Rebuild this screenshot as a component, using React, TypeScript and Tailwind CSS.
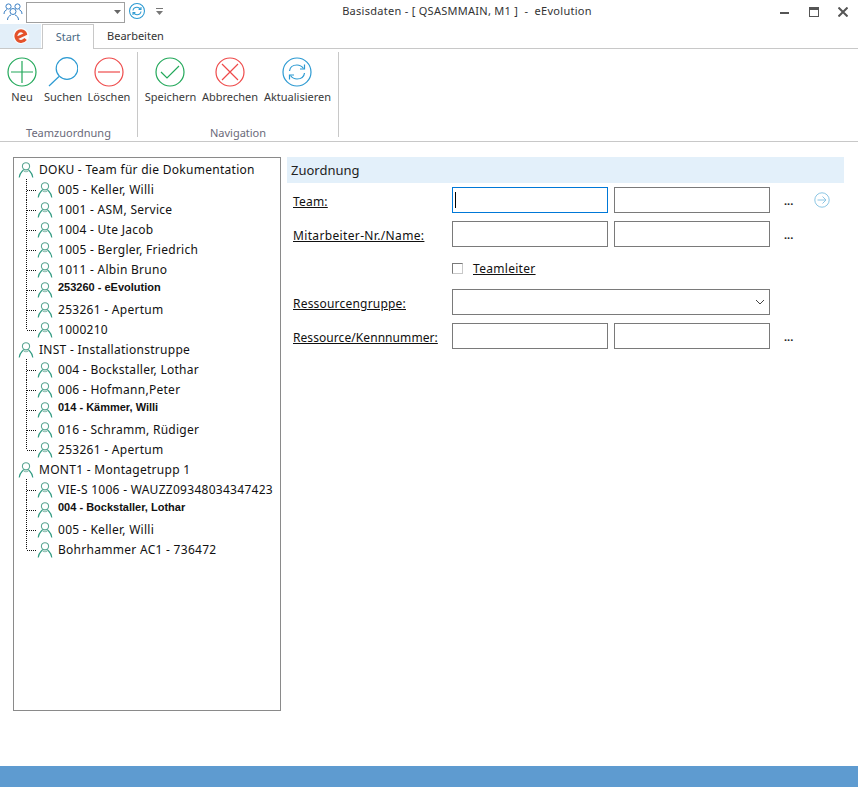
import React from "react";

const font = { fontFamily: '"Noto Sans", "Open Sans", sans-serif' };

function Person() {
  return (
    <svg width="16" height="18" viewBox="0 0 16 18" fill="none" stroke="#2f9a80" strokeWidth="1.1" className="shrink-0">
      <circle cx="8" cy="5.3" r="3.6" stroke="#5aa592" />
      <path d="M5.6 8.4 C 4.6 10.6 1.8 11 1.2 16.5" />
      <path d="M10.4 8.4 C 11.4 10.6 14.2 11 14.8 16.5" />
      <path d="M5.6 9.4 C 6.6 11.2 9.4 11.2 10.4 9.4" stroke="#8fc0b2" />
    </svg>
  );
}

function Connector({ last, first }: { last?: boolean; first?: boolean }) {
  return (
    <svg width="12" height="20" className="shrink-0 ml-[11px] overflow-visible" stroke="#111" strokeWidth="1" strokeDasharray="1 1">
      <path d={last ? "M1.5 0V10" : first ? "M1.5 -1V20" : "M1.5 0V20"} />
      <path d="M2 10.5H12" />
    </svg>
  );
}

type Child = { t: string; b?: boolean };
const tree: { t: string; c: Child[] }[] = [
  {
    t: "DOKU - Team für die Dokumentation",
    c: [
      { t: "005 - Keller, Willi" },
      { t: "1001 - ASM, Service" },
      { t: "1004 - Ute Jacob" },
      { t: "1005 - Bergler, Friedrich" },
      { t: "1011 - Albin Bruno" },
      { t: "253260 - eEvolution", b: true },
      { t: "253261 - Apertum" },
      { t: "1000210" },
    ],
  },
  {
    t: "INST - Installationstruppe",
    c: [
      { t: "004 - Bockstaller, Lothar" },
      { t: "006 - Hofmann,Peter" },
      { t: "014 - Kämmer, Willi", b: true },
      { t: "016 - Schramm, Rüdiger" },
      { t: "253261 - Apertum" },
    ],
  },
  {
    t: "MONT1 - Montagetrupp 1",
    c: [
      { t: "VIE-S 1006 - WAUZZ09348034347423" },
      { t: "004 - Bockstaller, Lothar", b: true },
      { t: "005 - Keller, Willi" },
      { t: "Bohrhammer AC1 - 736472" },
    ],
  },
];

function RibbonBtn({ label, w, ml, pr, children }: { label: string; w: string; ml: string; pr?: string; children: React.ReactNode }) {
  return (
    <div className={`flex flex-col items-center ${w} ${ml}`}>
      <div className={`h-[32px] flex items-center justify-center ${pr ?? ""}`}>{children}</div>
      <div className="text-[11px] leading-[16px] mt-[1px] text-[#3a3a3a] whitespace-nowrap">{label}</div>
    </div>
  );
}

function Circle({ color, children }: { color: string; children: React.ReactNode }) {
  return (
    <svg width="30" height="30" viewBox="0 0 30 30" fill="none" stroke={color} strokeWidth="1.2">
      <circle cx="15" cy="15" r="14" />
      {children}
    </svg>
  );
}

function Refresh({ color, size = 30 }: { color: string; size?: number }) {
  return (
    <svg width={size} height={size} viewBox="0 0 30 30" fill="none" stroke={color} strokeWidth={size < 20 ? 2 : 1.2}>
      <circle cx="15" cy="15" r="14" />
      <path d="M7.5 14 C 8 10 11 8 15 8 C 18 8 20 9.5 21.5 11.5" />
      <path d="M22.5 7.5 V12 H18" />
      <path d="M22.5 16 C 22 20 19 22 15 22 C 12 22 10 20.5 8.5 18.5" />
      <path d="M7.5 22.5 V18 H12" />
    </svg>
  );
}

function Input({ focused }: { focused?: boolean }) {
  return (
    <div className={`w-[156px] h-[26px] border ${focused ? "border-[#0078d7]" : "border-[#7a7a7a]"} bg-white flex items-center pl-[2px]`}>
      {focused && <div className="w-[1px] h-[16px] bg-black" />}
    </div>
  );
}

function Label({ tracking, children }: { tracking: string; children: React.ReactNode }) {
  return <div className={`w-[159px] ml-[6px] pt-[4px] text-[12px] leading-[16px] ${tracking} underline text-[#111] whitespace-nowrap`}>{children}</div>;
}

function Dots() {
  return <div className="ml-[14px] w-[10px] text-[11px] font-bold leading-[16px] mt-[6px] text-[#222]">...</div>;
}

export default function App() {
  return (
    <div className="w-[858px] h-[787px] bg-white flex flex-col overflow-hidden text-[#111]" style={font}>
      {/* Title bar */}
      <div className="h-[24px] flex items-center shrink-0">
        <svg width="20" height="20" viewBox="0 0 20 20" fill="none" stroke="#3a7fc4" strokeWidth="1" className="ml-[3px]">
          <circle cx="5.5" cy="4.5" r="2.6" />
          <circle cx="14.5" cy="4.5" r="2.6" />
          <path d="M1 12 C1 9 3 8 4 7.5 M19 12 C19 9 17 8 16 7.5" />
          <circle cx="10" cy="9.5" r="3" />
          <path d="M4.5 18 C4.5 15 6.5 13.5 8 13 M15.5 18 C15.5 15 13.5 13.5 12 13" />
        </svg>
        <div className="ml-[3px] w-[99px] h-[21px] border border-[#a0a0a0] bg-white flex items-center justify-end pr-[3px]">
          <svg width="7" height="4"><path d="M0 0H7L3.5 4Z" fill="#666" /></svg>
        </div>
        <div className="ml-[4px] -mt-[2px]"><Refresh color="#2c9ad2" size={16} /></div>
        <svg width="7" height="7" className="ml-[11px] -mt-[2px]" fill="#777"><path d="M0 0H7V1H0Z M0 3H7L3.5 7Z" /></svg>
        <div className="flex-1 text-center text-[11px] tracking-[0.28px] text-[#333] -mt-[2px] pr-[9px] whitespace-pre">Basisdaten - [ QSASMMAIN, M1 ]  -  eEvolution</div>
        <div className="flex items-center mr-[10px]">
          <div className="w-[9px] h-[2px] bg-[#555] mt-[1px]" />
          <div className="ml-[20px] w-[10px] h-[10px] border border-[#555] border-t-[3px]" />
          <svg width="10" height="10" stroke="#555" strokeWidth="2" className="ml-[19px]"><path d="M0.5 0.5L9.5 9.5M9.5 0.5L0.5 9.5" /></svg>
        </div>
      </div>

      {/* Tabs */}
      <div className="h-[25px] flex items-stretch border-b border-[#c8c8c8] shrink-0">
        <div className="w-[41px] bg-[#e3eff9] flex items-center justify-center">
          <svg width="18" height="18" viewBox="0 0 18 18" fill="none">
            <circle cx="9" cy="9" r="8" fill="#fff" fillOpacity="0.7" />
            <path d="M5 11 L13.5 7 C12.6 3.6 8 2.8 5.4 5.4 C2.6 8.4 4 14 8.6 14.4 C10.6 14.6 12.4 13.6 13.6 12" stroke="#e4512a" strokeWidth="3" />
          </svg>
        </div>
        <div className="w-[52px] ml-[1px] h-[25px] bg-white border border-b-0 border-[#c8c8c8] flex items-center justify-center text-[11px] text-[#4a6a85]">Start</div>
        <div className="w-[83px] flex items-center justify-center text-[11px] text-[#333]">Bearbeiten</div>
      </div>

      {/* Ribbon */}
      <div className="h-[93px] flex border-b border-[#c8c8c8] shrink-0">
        <div className="w-[138px] h-[85px] mt-[3px] border-r border-[#c8c8c8] flex flex-col">
          <div className="flex flex-1 pt-[4px]">
            <RibbonBtn label="Neu" w="w-[36px]" ml="ml-[4px]">
              <Circle color="#22a85a"><path d="M15 4V26M4 15H26" /></Circle>
            </RibbonBtn>
            <RibbonBtn label="Suchen" w="w-[38px]" ml="ml-[4px]">
              <svg width="30" height="30" viewBox="0 0 30 30" fill="none" stroke="#2c9ad2" strokeWidth="1.2">
                <circle cx="19" cy="11.5" r="10.8" />
                <path d="M11 19.5L1 29" />
              </svg>
            </RibbonBtn>
            <RibbonBtn label="Löschen" w="w-[42px]" ml="ml-[6px]">
              <Circle color="#ee4a4a"><path d="M4 15H26" /></Circle>
            </RibbonBtn>
          </div>
          <div className="text-[11px] leading-[16px] text-center text-[#6a6a7a] translate-y-[4px]">Teamzuordnung</div>
        </div>
        <div className="w-[201px] h-[85px] mt-[3px] border-r border-[#c8c8c8] flex flex-col">
          <div className="flex flex-1 pt-[4px]">
            <RibbonBtn label="Speichern" w="w-[51px]" ml="ml-[7px]" pr="pr-[1px]">
              <Circle color="#22a85a"><path d="M6 15L12 21L24 9" /></Circle>
            </RibbonBtn>
            <RibbonBtn label="Abbrechen" w="w-[56px]" ml="ml-[6px]">
              <Circle color="#ee4a4a"><path d="M7 7L23 23M23 7L7 23" /></Circle>
            </RibbonBtn>
            <RibbonBtn label="Aktualisieren" w="w-[67px]" ml="ml-[6px]" pr="pr-[1px]">
              <Refresh color="#2c9ad2" />
            </RibbonBtn>
          </div>
          <div className="text-[11px] leading-[16px] text-center text-[#6a6a7a] translate-y-[4px]">Navigation</div>
        </div>
      </div>

      {/* Body */}
      <div className="flex-1 flex pt-[15px] pl-[13px]">
        <div className="w-[268px] h-[554px] border border-[#8a8a8a] pt-[2px] pl-[4px] overflow-hidden">
          {tree.map((g) => (
            <div key={g.t}>
              <div className="h-[20px] flex items-center">
                <Person />
                <span className="ml-[5px] text-[12px] tracking-[0.28px] whitespace-nowrap">{g.t}</span>
              </div>
              {g.c.map((c, i) => (
                <div key={c.t + i} className="h-[20px] flex items-center -ml-[4px]">
                  <Connector first={i === 0} last={i === g.c.length - 1} />
                  <Person />
                  <span
                    className={c.b ? "ml-[5px] text-[11px] font-bold whitespace-nowrap mb-[6px]" : "ml-[5px] text-[12px] tracking-[0.28px] whitespace-nowrap"}
                    style={c.b ? { fontFamily: '"Liberation Sans", sans-serif' } : undefined}
                  >
                    {c.t}
                  </span>
                </div>
              ))}
            </div>
          ))}
        </div>

        <div className="w-[557px] ml-[6px]">
          <div className="h-[26px] bg-[#e3f0fa] flex items-center pl-[4px] pt-[2px] text-[13px] text-[#222]">Zuordnung</div>

          <div className="flex items-start mt-[4px] h-[26px]">
            <div className="self-center"><Label tracking="tracking-[0.2px]">Team:</Label></div>
            <Input focused />
            <div className="ml-[6px]"><Input /></div>
            <Dots />
            <svg width="16" height="16" viewBox="0 0 16 16" fill="none" stroke="#8cc6e4" strokeWidth="1" className="ml-[20px] mt-[5px]">
              <circle cx="8" cy="8" r="7.2" />
              <path d="M3.5 8H12M8.5 4.5L12 8L8.5 11.5" />
            </svg>
          </div>

          <div className="flex items-start mt-[8px] h-[26px]">
            <div className="self-center"><Label tracking="tracking-[0.35px]">Mitarbeiter-Nr./Name:</Label></div>
            <Input />
            <div className="ml-[6px]"><Input /></div>
            <Dots />
          </div>

          <div className="flex items-center mt-[12px] h-[18px] pl-[165px]">
            <div className="w-[11px] h-[11px] border border-[#7a7a7a] border-b-[#c8c8c8] border-r-[#c8c8c8] bg-white" />
            <div className="ml-[10px] mt-[2px] text-[12px] tracking-[0.3px] underline text-[#111]">Teamleiter</div>
          </div>

          <div className="flex items-center mt-[12px] h-[26px]">
            <Label tracking="tracking-[0.2px]">Ressourcengruppe:</Label>
            <div className="w-[318px] h-[26px] border border-[#7a7a7a] flex items-center justify-end pr-[4px]">
              <svg width="10" height="6" fill="none" stroke="#444" strokeWidth="1"><path d="M1 1L5 5L9 1" /></svg>
            </div>
          </div>

          <div className="flex items-start mt-[8px] h-[26px]">
            <div className="self-center"><Label tracking="tracking-[0.07px]">Ressource/Kennnummer:</Label></div>
            <Input />
            <div className="ml-[6px]"><Input /></div>
            <Dots />
          </div>
        </div>
      </div>

      <div className="h-[21px] bg-[#5e9bd0] shrink-0" />
    </div>
  );
}
